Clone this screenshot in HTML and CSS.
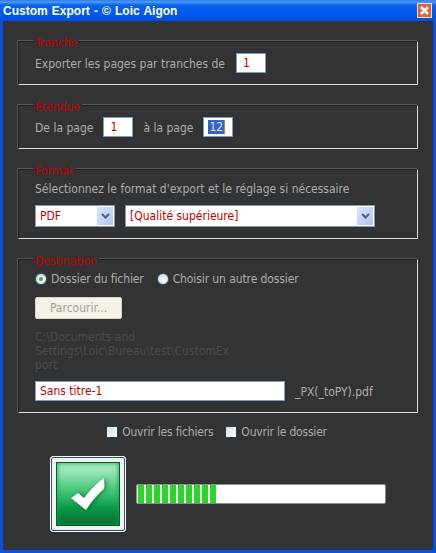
FILE: index.html
```html
<!DOCTYPE html>
<html lang="fr">
<head>
    <meta charset="UTF-8">
    <title>Custom Export</title>
    <link rel="stylesheet" href="styles.css">
</head>
<body>
    <div class="window">
        <div class="titlebar">
            <span class="title">Custom Export - © Loic Aigon</span>
            <span class="close">
                <svg width="13" height="13" viewBox="0 0 13 13"><path d="M3 3l7 7M10 3l-7 7" stroke="#fff" stroke-width="2.600" fill="none"/></svg>
            </span>
        </div>
        <div class="content">
            <fieldset class="group group-tranche">
                <legend>Tranche</legend>
                <div class="row">
                    <span>Exporter les pages par tranches de</span>
                    <input class="field" type="text" value="1">
                </div>
            </fieldset>

            <fieldset class="group group-etendue">
                <legend>Étendue</legend>
                <div class="row">
                    <span>De la page</span>
                    <input class="field" type="text" value="1">
                    <span>à la page</span>
                    <div class="field field-selected"><span class="selected">12</span></div>
                </div>
            </fieldset>

            <fieldset class="group group-format">
                <legend>Format</legend>
                <div class="hint">Sélectionnez le format d'export et le réglage si nécessaire</div>
                <div class="row selects">
                    <div class="select select-small">
                        <span>PDF</span>
                        <span class="arrow"><svg width="9" height="7" viewBox="0 0 9 7"><path d="M1 1l3.500 3.500L8 1" stroke="#4d6185" stroke-width="2" fill="none"/></svg></span>
                    </div>
                    <div class="select select-large">
                        <span>[Qualité supérieure]</span>
                        <span class="arrow"><svg width="9" height="7" viewBox="0 0 9 7"><path d="M1 1l3.500 3.500L8 1" stroke="#4d6185" stroke-width="2" fill="none"/></svg></span>
                    </div>
                </div>
            </fieldset>

            <fieldset class="group group-destination">
                <legend>Destination</legend>
                <div class="row radios">
                    <label class="option"><span class="radio radio-on"></span>Dossier du fichier</label>
                    <label class="option"><span class="radio"></span>Choisir un autre dossier</label>
                </div>
                <button class="browse" disabled>Parcourir...</button>
                <div class="path">C:\Documents and<br>Settings\Loic\Bureau\test\CustomEx<br>port</div>
                <div class="row name-row">
                    <input class="field field-name" type="text" value="Sans titre-1">
                    <span>_PX(_toPY).pdf</span>
                </div>
            </fieldset>

            <div class="checks">
                <label class="option"><span class="check"></span>Ouvrir les fichiers</label>
                <label class="option"><span class="check"></span>Ouvrir le dossier</label>
            </div>

            <div class="footer">
                <div class="go">
                    <div class="go-inner">
                        <svg class="tick" width="36" height="34" viewBox="0 0 36 34"><path d="M1 21L8 16l6 5C20 13 27 6 34 1c0 4 1 8 0 11C27 18 21 25 16 33z" fill="#fff"/></svg>
                    </div>
                </div>
                <div class="progress">
                    <i></i><i></i><i></i><i></i><i></i><i></i><i></i><i></i><i></i><i></i>
                </div>
            </div>
        </div>
    </div>
</body>
</html>
```

FILE: styles.css
```css
* {
    box-sizing: border-box;
}

html, body {
    margin: 0;
    height: 100%;
    overflow: hidden;
}

body {
    font-family: "DejaVu Sans Condensed", "DejaVu Sans", sans-serif;
    font-size: 12px;
    color: #adadad;
    background: #333;
}

.window {
    width: 436px;
    height: 553px;
    display: flex;
    flex-direction: column;
    background: #0a50e6;
}

.titlebar {
    height: 21px;
    flex: none;
    display: flex;
    align-items: center;
    justify-content: space-between;
    padding: 0 5px 0 3px;
    background: linear-gradient(to bottom, #2b7cf0 0, #4a9bf8 2px, #0a62ea 5px, #0058ee 15px, #0050e0 21px);
}

.title {
    font-family: "Liberation Sans", sans-serif;
    font-weight: bold;
    font-size: 12px;
    word-spacing: 0.800px;
    color: #fff;
}

.close {
    width: 13px;
    height: 13px;
    display: flex;
    background: #e2603a;
    outline: 1px solid #f3d9cc;
}

.content {
    flex: 1;
    margin: 0 3px 3px;
    padding: 11px 15px 0;
    background: #333;
}

.group {
    margin: 0 0 11px;
    padding: 0 16px;
    min-width: 0;
    width: 400px;
    border: 1px solid;
    border-color: #1d1d1d #ddd #ddd #1d1d1d;
    box-shadow: -1px -1px 0 #585858;
}

/* text sits a little under the frame line, as in the original dialog */
.group legend {
    margin-left: -2px;
    padding: 4px 2px 0;
    color: #c00000;
    line-height: 14px;
    background: #333;
}

.group-tranche,
.group-etendue {
    height: 53px;
}

.group-format {
    height: 79px;
}

.group-destination {
    height: 163px;
}

.group-tranche .row,
.group-etendue .row {
    margin-top: 3px;
}

.group-etendue .row {
    gap: 10px;
}

.row {
    display: flex;
    align-items: center;
    gap: 11px;
}

.row > span {
    padding-top: 2px;
}

.field {
    width: 30px;
    height: 20px;
    padding: 0 6px;
    border: 1px solid #7f9db9;
    background: #fff;
    color: #c00000;
    font: inherit;
    line-height: 18px;
    border-radius: 0;
    outline: none;
}

.field-selected {
    padding: 0 4px;
    display: flex;
    align-items: center;
}

.selected {
    background: #3163c5;
    color: #dfe6f5;
    padding: 0 1px;
    border-right: 1px solid #e07a20;
    line-height: 14px;
}

.hint {
    margin-top: 3px;
    line-height: 16px;
}

.selects {
    margin-top: 8px;
    gap: 10px;
}

.select {
    height: 22px;
    display: flex;
    align-items: center;
    justify-content: space-between;
    padding: 0 1px 0 4px;
    border: 1px solid #7f9db9;
    background: #fff;
    color: #c00000;
}

.select-small {
    width: 80px;
}

.select-large {
    width: 250px;
}

.arrow {
    width: 16px;
    height: 18px;
    display: flex;
    align-items: center;
    justify-content: center;
    background: linear-gradient(135deg, #dbe5fa, #b0c6f0);
}

.radios {
    margin-top: 4px;
    gap: 13px;
    height: 14px;
    letter-spacing: -0.1px;
}

.option {
    display: flex;
    align-items: center;
    gap: 4px;
}

.radio {
    flex: none;
    width: 12px;
    height: 12px;
    border-radius: 50%;
    display: flex;
    align-items: center;
    justify-content: center;
    background: radial-gradient(circle at 60% 60%, #fff, #ccc);
    border: 1px solid #2f5a88;
}

.radio-on::after {
    content: "";
    width: 4px;
    height: 4px;
    border-radius: 50%;
    background: #2fb14a;
}

.browse {
    display: block;
    width: 87px;
    height: 22px;
    margin-top: 11px;
    padding: 0;
    border: 1px solid #d8d5c4;
    border-radius: 2px;
    background: #f4f2e7;
    color: #a3a195;
    font: inherit;
}

.path {
    margin-top: 11px;
    line-height: 14px;
    color: #4c4c4c;
}

.name-row {
    margin-top: 9px;
    gap: 10px;
}

.field-name {
    width: 250px;
    padding: 0 4px;
}

.checks {
    display: flex;
    justify-content: center;
    gap: 12px;
    margin-top: 1px;
    padding-right: 3px;
    line-height: 16px;
    letter-spacing: -0.2px;
}

.check {
    flex: none;
    width: 12px;
    height: 12px;
    border: 1px solid #1f3f63;
    background: linear-gradient(135deg, #dcdcd6, #fff);
}

.footer {
    display: flex;
    align-items: center;
    gap: 10px;
    margin-top: 16px;
    padding-left: 32px;
}

.go {
    width: 76px;
    height: 76px;
    padding: 5px;
    border: 1px solid #fff;
    border-radius: 3px;
    background: #f2f1ea;
    box-shadow: inset 0 0 0 1px #1c4f8c;
}

.go-inner {
    width: 100%;
    height: 100%;
    display: flex;
    align-items: center;
    justify-content: center;
    border: 1px solid #0b5c2b;
    background: linear-gradient(to bottom, #a8f0c0 0, #9be8b6 12%, #3cc274 48%, #0c9a48 72%, #086a2f 100%);
    box-shadow: inset 0 0 5px #0aa84a;
}

.tick {
    filter: drop-shadow(2px 0 2px rgba(0, 60, 20, 0.5));
}

.progress {
    width: 250px;
    height: 20px;
    display: flex;
    gap: 2px;
    padding: 0 1px;
    border: 1px solid #8a8a8a;
    border-radius: 2px;
    background: #fff;
}

.progress i {
    width: 6px;
    background: #2bd62b;
}
```
